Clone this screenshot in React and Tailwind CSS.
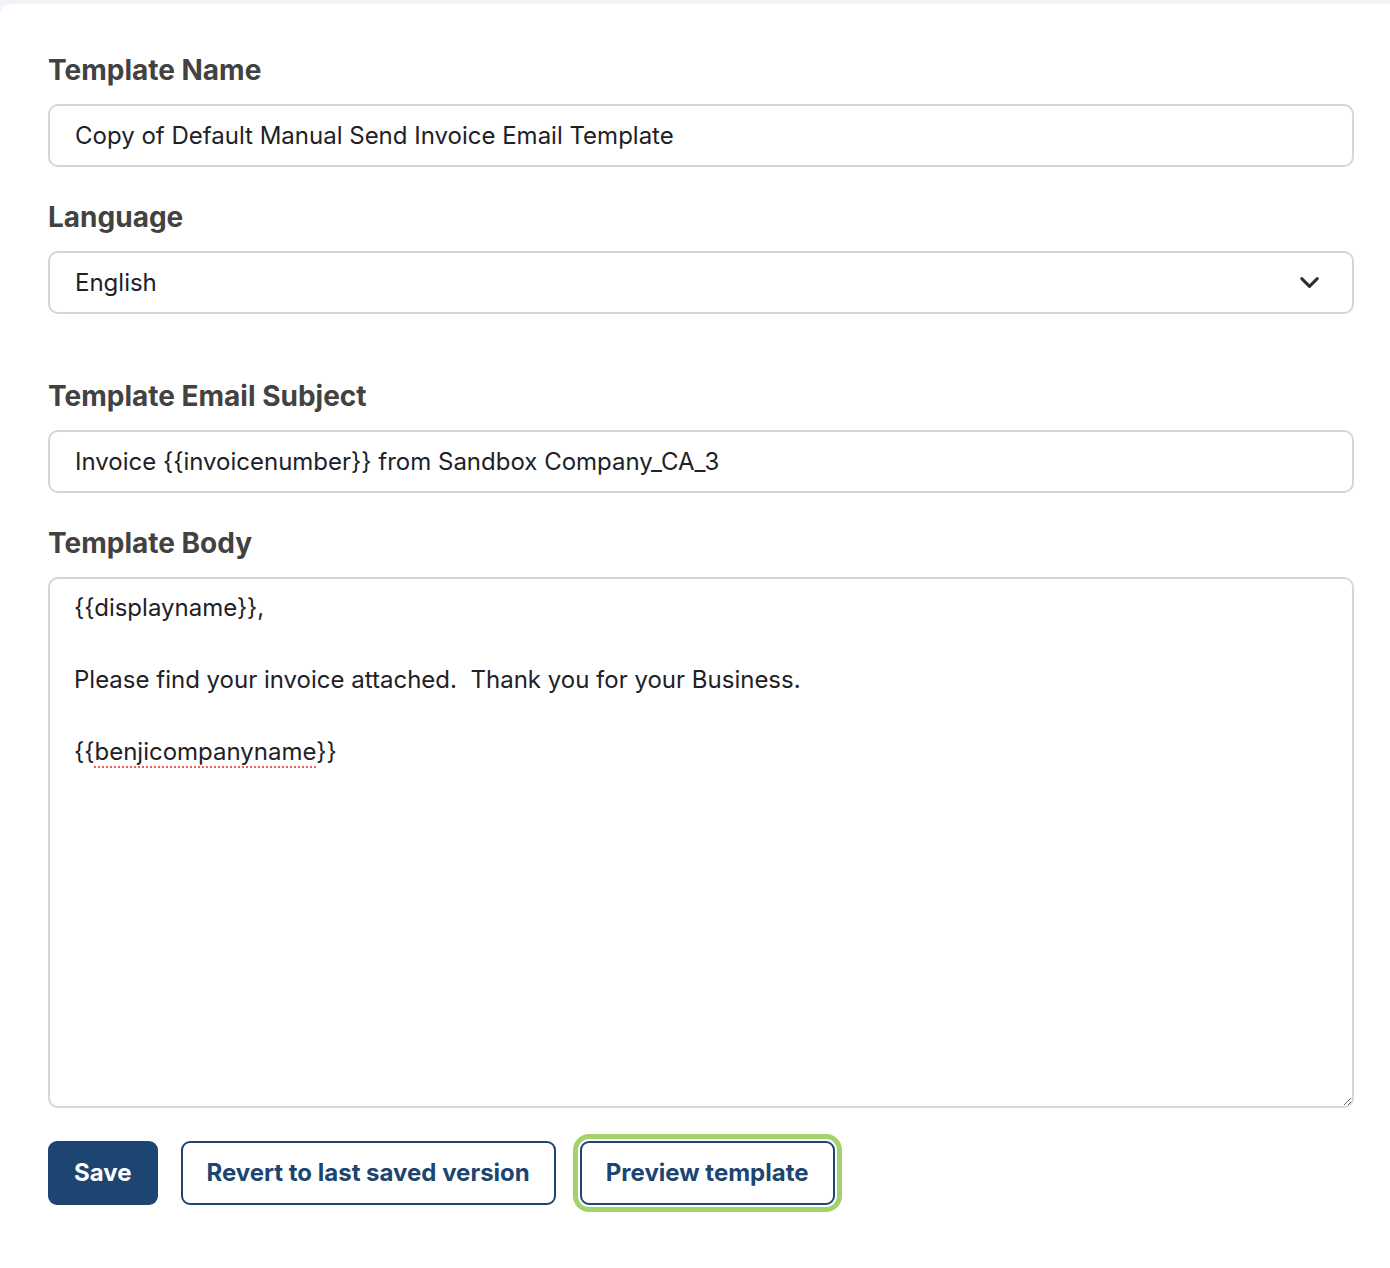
import { ChevronDown } from "lucide-react";

const inter = { fontFamily: "Inter, 'Noto Sans', sans-serif" };

function Label({ children }) {
  return (
    <label className="block text-[28px] leading-[36px] font-bold text-[#424242] mb-4">
      {children}
    </label>
  );
}

function TextInput({ value }) {
  return (
    <input
      readOnly
      value={value}
      className="block w-full h-[63px] px-[25px] rounded-[10px] border-2 border-[#d3d6da] bg-white text-[24px] text-[#1e2126] outline-none"
    />
  );
}

export default function App() {
  return (
    <div className="min-h-screen bg-[#f0f4f8] pt-1" style={inter}>
      <div className="bg-white rounded-tl-[10px] min-h-[1264px] pl-12 pr-9 pt-12 pb-16">
        <div>
          <Label>Template Name</Label>
          <TextInput value="Copy of Default Manual Send Invoice Email Template" />
        </div>

        <div className="mt-8">
          <Label>Language</Label>
          <div className="flex items-center justify-between w-full h-[63px] pl-[25px] pr-[27px] rounded-[10px] border-2 border-[#d3d6da] bg-white text-[24px] text-[#1e2126]">
            <span>English</span>
            <ChevronDown size={31} strokeWidth={2.3} className="text-[#2b2f33]" />
          </div>
        </div>

        <div className="mt-16">
          <Label>Template Email Subject</Label>
          <TextInput value="Invoice {{invoicenumber}} from Sandbox Company_CA_3" />
        </div>

        <div className="mt-8">
          <Label>Template Body</Label>
          <div className="w-full h-[531px] resize-y overflow-auto rounded-[10px] border-2 border-[#d3d6da] bg-white px-[24px] pt-[11px] text-[24px] leading-[36px] text-[#1e2126] whitespace-pre-wrap">
            {"{{displayname}},\n\nPlease find your invoice attached.  Thank you for your Business.\n\n{{"}
            <span className="underline decoration-dotted decoration-[#e8625b] decoration-2 underline-offset-[6px]">
              benjicompanyname
            </span>
            {"}}"}
          </div>
        </div>

        <div className="mt-[33px] flex items-center">
          <button className="h-[64px] px-[26px] rounded-[9px] bg-[#1c4571] text-white text-[24px] font-bold">
            Save
          </button>
          <button className="ml-[23px] h-[64px] px-[24px] rounded-[9px] border-2 border-[#1c4571] bg-white text-[#1c4571] text-[24px] font-bold">
            Revert to last saved version
          </button>
          <button className="ml-[24px] h-[64px] px-[24px] rounded-[9px] border-2 border-[#1c4571] bg-white text-[#1c4571] text-[24px] font-bold ring-[5px] ring-[#a2d26c] ring-offset-2 ring-offset-white">
            Preview template
          </button>
        </div>
      </div>
    </div>
  );
}
